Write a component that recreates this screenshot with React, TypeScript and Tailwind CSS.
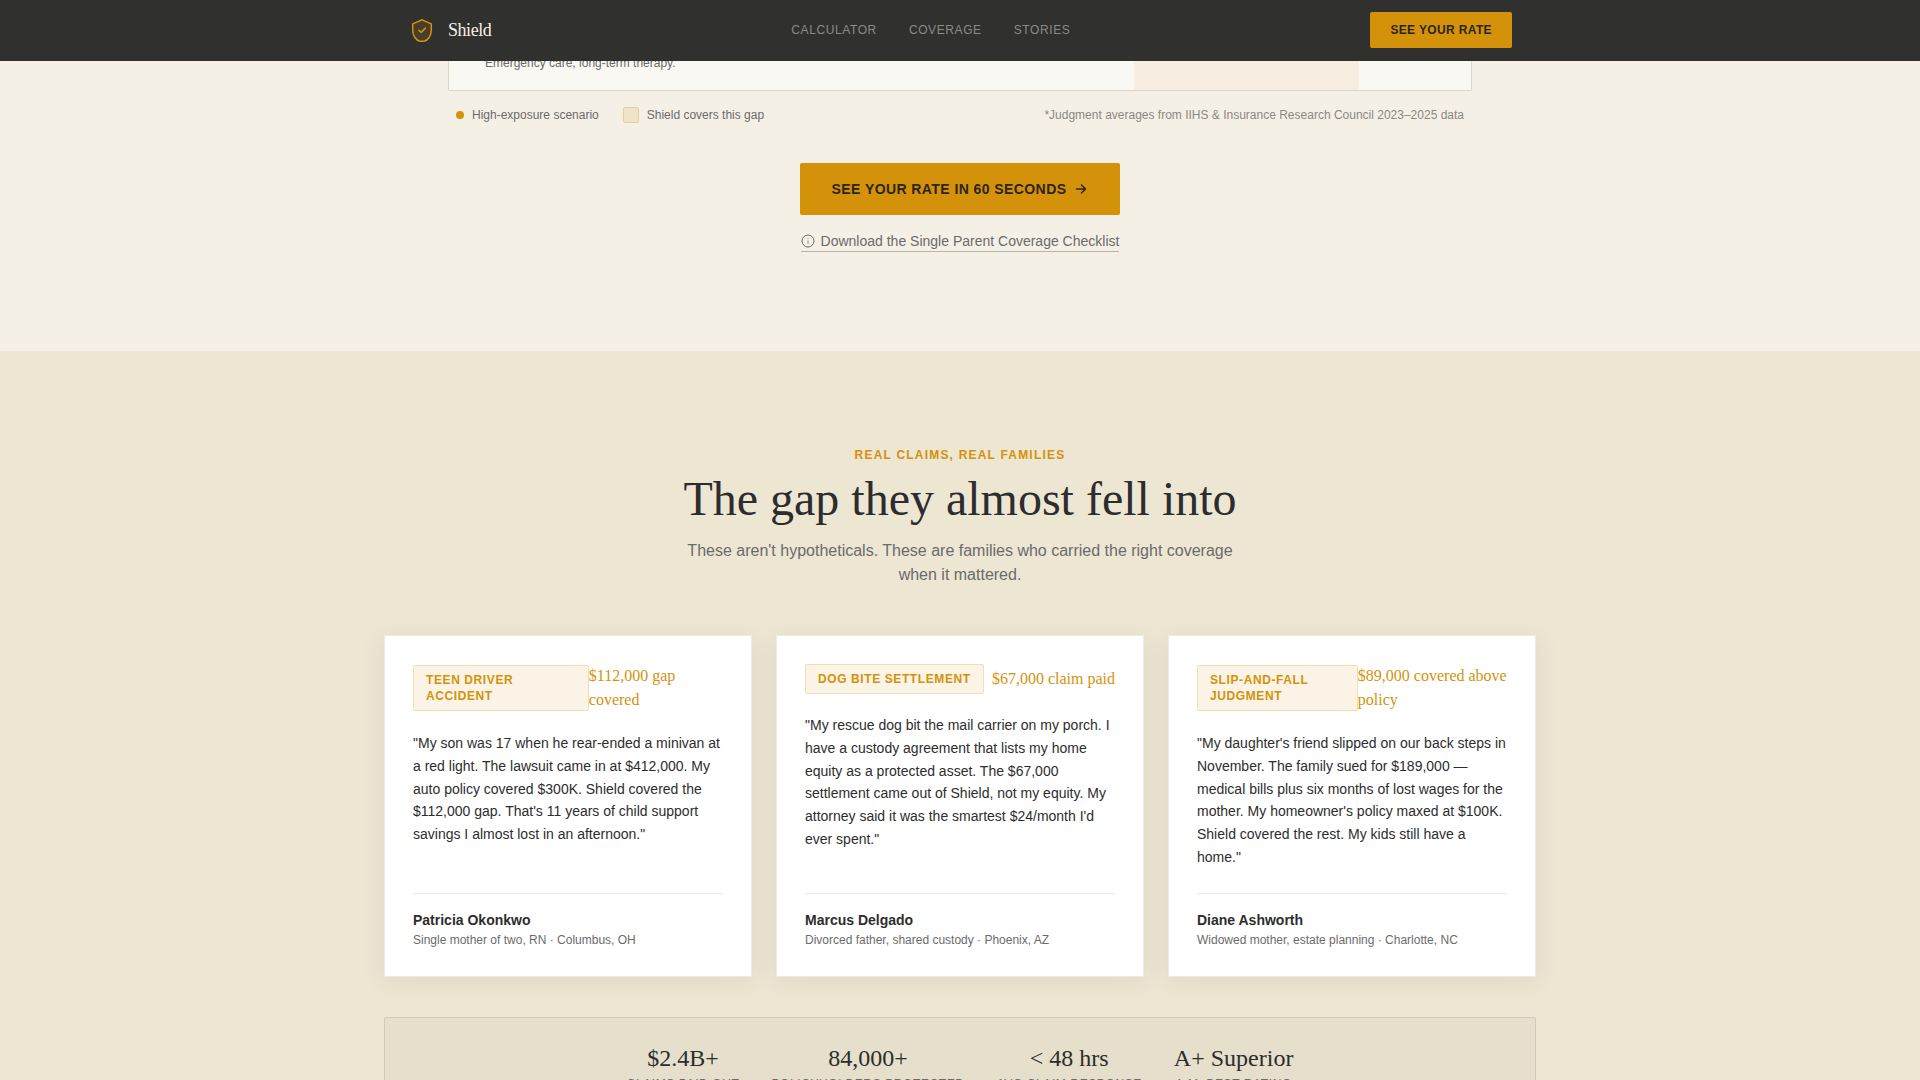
const links = ["Calculator", "Coverage", "Stories"];

const stories = [
  {
    badge: "Teen driver accident",
    amount: "$112,000 gap covered",
    quote:
      "My son was 17 when he rear-ended a minivan at a red light. The lawsuit came in at $412,000. My auto policy covered $300K. Shield covered the $112,000 gap. That's 11 years of child support savings I almost lost in an afternoon.",
    name: "Patricia Okonkwo",
    detail: "Single mother of two, RN · Columbus, OH",
  },
  {
    badge: "Dog bite settlement",
    amount: "$67,000 claim paid",
    quote:
      "My rescue dog bit the mail carrier on my porch. I have a custody agreement that lists my home equity as a protected asset. The $67,000 settlement came out of Shield, not my equity. My attorney said it was the smartest $24/month I'd ever spent.",
    name: "Marcus Delgado",
    detail: "Divorced father, shared custody · Phoenix, AZ",
  },
  {
    badge: "Slip-and-fall judgment",
    amount: "$89,000 covered above policy",
    quote:
      "My daughter's friend slipped on our back steps in November. The family sued for $189,000 — medical bills plus six months of lost wages for the mother. My homeowner's policy maxed at $100K. Shield covered the rest. My kids still have a home.",
    name: "Diane Ashworth",
    detail: "Widowed mother, estate planning · Charlotte, NC",
  },
];

const stats = [
  { value: "$2.4B+", label: "Claims paid out" },
  { value: "84,000+", label: "Policyholders protected" },
  { value: "< 48 hrs", label: "Avg claim response" },
  { value: "A+ Superior", label: "A.M. Best rating" },
];

function Logo() {
  return (
    <svg width="28" height="28" viewBox="0 0 28 28" fill="none" aria-hidden="true">
      <path
        d="M14 3.8L4.700 7.900v6.100c0 6 3.300 10.300 7.300 11.300h4c4-1 7.300-5.300 7.300-11.300V7.900L14 3.800z"
        fill="#d4920b"
        fillOpacity="0.15"
        stroke="#d4920b"
        strokeWidth="1.500"
      />
      <path d="M10.800 14.200l2.300 2.200 4.300-4.300" stroke="#d4920b" strokeWidth="1.500" strokeLinecap="round" strokeLinejoin="round" />
    </svg>
  );
}

function Header() {
  return (
    <header className="fixed inset-x-0 top-0 z-10 border-b border-[#302f2d] bg-[#30302f]">
      <div className="mx-auto flex max-w-6xl items-center justify-between px-6 py-3">
        <a href="#top" className="flex items-center gap-3">
          <Logo />
          <span className="font-['Liberation_Serif',serif] text-lg tracking-tight text-[#f5f0e6]">Shield</span>
        </a>
        <nav className="flex items-center gap-8">
          {links.map((label) => (
            <a key={label} href={"#" + label.toLowerCase()} className="text-xs tracking-wider text-[#8b8a88] uppercase">
              {label}
            </a>
          ))}
        </nav>
        <button type="button" className="rounded-xs bg-[#d4920b] px-5 py-2.5 text-xs font-bold tracking-[0.03em] text-[#2c2416] uppercase">
          See your rate
        </button>
      </div>
    </header>
  );
}

function Coverage() {
  return (
    <section id="coverage" className="bg-[#f5f0e6] pb-[99px]">
      <div className="mx-auto max-w-5xl">
        <div className="overflow-hidden rounded-b-xs border border-t-0 border-[#dbd5c8] bg-[#faf8f2]">
          <table className="w-full table-fixed">
            <tbody>
              <tr>
                <td className="w-[67%] px-9 pt-[55px] pb-[19px] text-xs text-[#6b6b6b]">Emergency care, long-term therapy.</td>
                <td className="w-[22%] bg-[#f7eee1]" />
                <td className="w-[11%]" />
              </tr>
            </tbody>
          </table>
        </div>
        <div className="mt-4 flex items-center justify-between px-2 text-xs text-[#6b6b6b]">
          <div className="flex items-center gap-6">
            <span className="flex items-center gap-2">
              <span className="size-2 rounded-full bg-[#d4920b]" />
              High-exposure scenario
            </span>
            <span className="flex items-center gap-2">
              <span className="size-4 rounded-xs border border-[#e5d09d] bg-[#f0e3c8]" />
              Shield covers this gap
            </span>
          </div>
          <p className="text-[#8a8883]">*Judgment averages from IIHS &amp; Insurance Research Council 2023–2025 data</p>
        </div>
        <div className="mt-10 flex flex-col items-center">
          <button
            type="button"
            className="flex items-center gap-2 rounded-xs bg-[#d4920b] px-8 py-4 text-sm font-bold tracking-[0.03em] text-[#2c2416] uppercase"
          >
            See your rate in 60 seconds
            <svg width="14" height="14" viewBox="0 0 14 14" fill="none" stroke="currentColor" strokeWidth="1.500" strokeLinecap="round" strokeLinejoin="round" aria-hidden="true">
              <path d="M2.500 7h9M7.500 3l4 4-4 4" />
            </svg>
          </button>
          <a href="#checklist" className="mt-4 flex items-center gap-1.5 border-b border-[#b8b4ac] text-sm text-[#6b6b6b]">
            <svg width="14" height="14" viewBox="0 0 14 14" fill="none" stroke="currentColor" aria-hidden="true">
              <circle cx="7" cy="7" r="6" />
              <path d="M7 6.500v3.500M7 4v1" strokeOpacity="0.7" />
            </svg>
            Download the Single Parent Coverage Checklist
          </a>
        </div>
      </div>
    </section>
  );
}

function Stories() {
  return (
    <section id="stories" className="bg-[#ede6d3] py-24">
      <div className="mx-auto max-w-6xl">
        <div className="text-center">
          <p className="text-xs font-bold tracking-widest text-[#d4920b] uppercase">Real claims, real families</p>
          <h2 className="mt-3 font-['Liberation_Serif',serif] text-5xl text-[#2d2d2d]">The gap they almost fell into</h2>
          <p className="mx-auto mt-4 max-w-xl text-base text-[#6b6b6b]">
            These aren't hypotheticals. These are families who carried the right coverage when it mattered.
          </p>
        </div>
        <div className="mt-12 grid grid-cols-3 gap-6">
          {stories.map((story) => (
            <article key={story.name} className="flex flex-col border border-[#f0ebe2] bg-white p-7 shadow-[0_4px_24px_rgba(45,45,45,0.08)]">
              <div className="mb-5 flex items-center justify-between">
                <span className="rounded-xs border border-[#f2dfb5] bg-[#fbf4e6] px-3 py-1.5 text-xs font-bold tracking-wider text-[#d4920b] uppercase">
                  {story.badge}
                </span>
                <span className="font-['Liberation_Serif',serif] text-base text-[#d4920b]">{story.amount}</span>
              </div>
              <blockquote className="mb-6 flex-1 text-sm leading-relaxed text-[#2d2d2d]">{`"${story.quote}"`}</blockquote>
              <div className="border-t border-[#ececec] pt-4">
                <p className="text-sm font-bold text-[#2d2d2d]">{story.name}</p>
                <p className="mt-0.5 text-xs text-[#6b6b6b]">{story.detail}</p>
              </div>
            </article>
          ))}
        </div>
        <div className="mt-10 flex justify-center gap-8 rounded-xs border border-[#d2cab9] bg-[#e5dfcb] p-6 text-center">
          {stats.map((stat) => (
            <div key={stat.label}>
              <p className="font-['Liberation_Serif',serif] text-2xl text-[#2d2d2d]">{stat.value}</p>
              <p className="mt-0.5 text-xs tracking-wider text-[#6b6b6b] uppercase">{stat.label}</p>
            </div>
          ))}
        </div>
      </div>
    </section>
  );
}

export default function App() {
  return (
    <div id="top" className="font-['Liberation_Sans',Arial,sans-serif]">
      <Header />
      <main>
        <Coverage />
        <Stories />
      </main>
    </div>
  );
}
